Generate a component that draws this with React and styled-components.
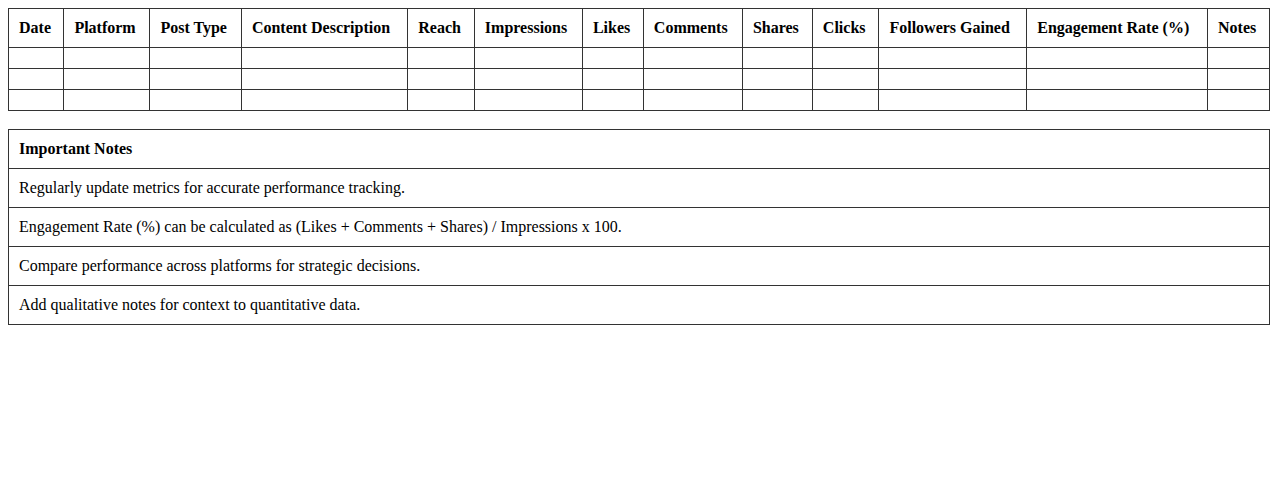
import styled, { createGlobalStyle } from "styled-components";

const GlobalStyle = createGlobalStyle`
  body {
    margin: 8px;
    font-family: "Liberation Serif", "Times New Roman", serif;
    font-size: 16px;
    color: #000;
    background: #fff;
  }
`;

const Table = styled.table`
  width: 100%;
  border-collapse: collapse;
  margin-bottom: ${(p) => p.$gap || 0}px;
`;

const Th = styled.th`
  border: 1px solid #333;
  padding: 10px;
  text-align: left;
  font-weight: bold;
`;

const Td = styled.td`
  border: 1px solid #333;
  padding: 10px;
  text-align: left;
`;

const columns = [
  "Date",
  "Platform",
  "Post Type",
  "Content Description",
  "Reach",
  "Impressions",
  "Likes",
  "Comments",
  "Shares",
  "Clicks",
  "Followers Gained",
  "Engagement Rate (%)",
  "Notes",
];

const notes = [
  "Regularly update metrics for accurate performance tracking.",
  "Engagement Rate (%) can be calculated as (Likes + Comments + Shares) / Impressions x 100.",
  "Compare performance across platforms for strategic decisions.",
  "Add qualitative notes for context to quantitative data.",
];

export default function App() {
  return (
    <>
      <GlobalStyle />
      <Table $gap={18}>
        <thead>
          <tr>
            {columns.map((c) => (
              <Th key={c}>{c}</Th>
            ))}
          </tr>
        </thead>
        <tbody>
          {[0, 1, 2].map((r) => (
            <tr key={r}>
              {columns.map((c) => (
                <Td key={c}></Td>
              ))}
            </tr>
          ))}
        </tbody>
      </Table>
      <Table>
        <thead>
          <tr>
            <Th>Important Notes</Th>
          </tr>
        </thead>
        <tbody>
          {notes.map((n) => (
            <tr key={n}>
              <Td>{n}</Td>
            </tr>
          ))}
        </tbody>
      </Table>
    </>
  );
}
